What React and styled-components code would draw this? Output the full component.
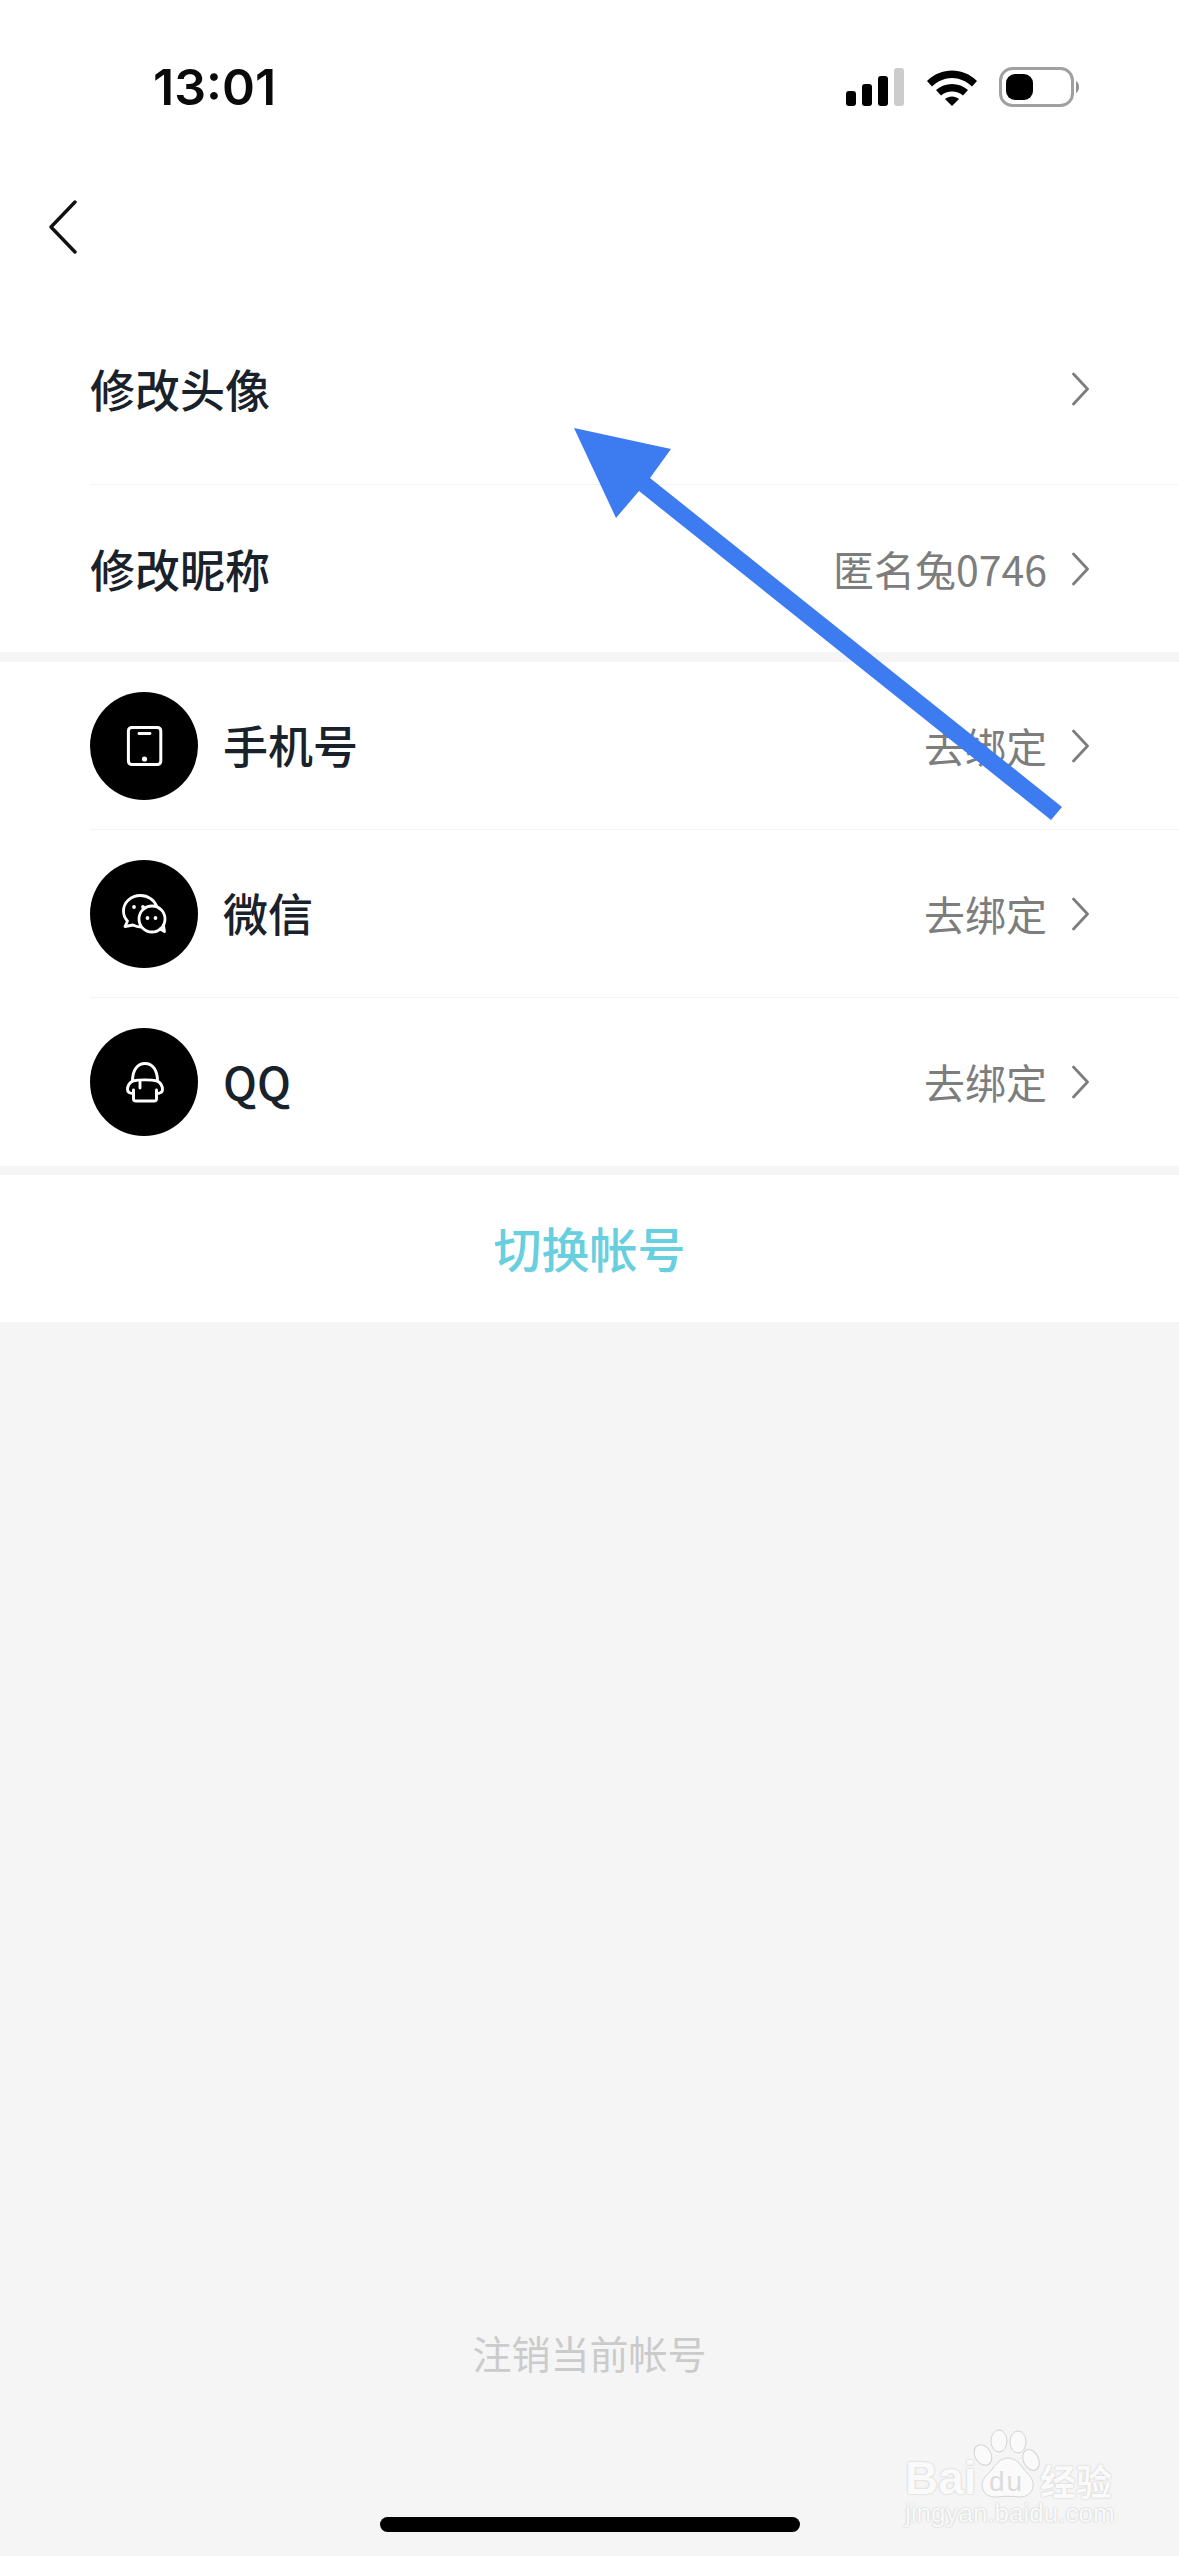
import React from "react";
import styled, { createGlobalStyle } from "styled-components";

const Global = createGlobalStyle`
  html, body { margin: 0; padding: 0; background: #f5f5f5; }
  body { font-family: "Noto Sans CJK SC", "Noto Sans", sans-serif; }
`;
const Page = styled.div`
  position: relative;
  width: 1179px;
  height: 2556px;
  overflow: hidden;
  display: flex;
  flex-direction: column;
  background: #f5f5f5;
`;
const TopArea = styled.div`
  background: #fff;
  height: 294px;
  display: flex;
  flex-direction: column;
`;
const StatusBar = styled.div`
  height: 174px;
  display: flex;
  align-items: center;
  justify-content: space-between;
  padding: 0 96px 0 153px;
`;
const Time = styled.div`
  font-family: Inter, "Liberation Sans", sans-serif;
  font-weight: 600;
  font-size: 50px;
  line-height: 50px;
  color: #0a0a0a;
`;
const IconsRow = styled.div`
  display: flex;
  align-items: center;
  gap: 21px;
`;
const BackRow = styled.div`
  padding: 26px 0 0 48px;
  display: flex;
`;
const Section = styled.section`
  background: #fff;
  margin-bottom: ${(p) => p.$gap || 0}px;
`;
const Row = styled.div`
  height: ${(p) => p.$h}px;
  margin-left: 90px;
  padding-right: 90px;
  display: flex;
  align-items: center;
  gap: 25px;
  border-bottom: ${(p) => (p.$line ? "1px solid #f3f3f3" : "none")};
`;
const Circle = styled.div`
  width: 108px;
  height: 108px;
  border-radius: 50%;
  background: #000;
  flex: none;
  display: flex;
  align-items: center;
  justify-content: center;
`;
const Label = styled.div`
  font-size: 45px;
  font-weight: 500;
  line-height: 60px;
  color: #19222a;
  flex: 1;
  padding-bottom: ${(p) => p.$lift || 0}px;
`;
const Value = styled.div`
  font-size: 41px;
  line-height: 56px;
  color: #7d7d7d;
  padding-bottom: 2px;
`;
const SwitchButton = styled.div`
  background: #fff;
  height: 147px;
  padding-bottom: 4px;
  box-sizing: border-box;
  display: flex;
  align-items: center;
  justify-content: center;
  font-size: 48px;
  font-weight: 500;
  color: #68cfdf;
`;
const Spacer = styled.div`
  flex: 1;
`;
const Logout = styled.div`
  text-align: center;
  font-size: 39px;
  line-height: 56px;
  color: #cbcbcb;
  margin-bottom: 176px;
`;
const HomeBar = styled.div`
  position: absolute;
  left: 380px;
  top: 2517px;
  width: 420px;
  height: 15px;
  border-radius: 8px;
  background: #000;
`;
const ArrowLayer = styled.svg`
  position: absolute;
  left: 0;
  top: 0;
  pointer-events: none;
`;
const Watermark = styled.div`
  position: absolute;
  left: 904px;
  top: 2428px;
  width: 216px;
  height: 102px;
  color: #fafafa;
  text-shadow: 0 0 2px #bdbdbd;
`;
const WmBai = styled.span`
  position: absolute;
  left: 1px;
  top: 29px;
  font-family: "Liberation Sans", sans-serif;
  font-weight: 700;
  font-size: 46px;
  line-height: 42px;
`;
const WmDu = styled.span`
  position: absolute;
  left: 85px;
  top: 41px;
  font-family: "Liberation Sans", sans-serif;
  font-size: 28px;
  line-height: 26px;
  letter-spacing: 2px;
  color: #dcdcdc;
  text-shadow: none;
`;
const WmCn = styled.span`
  position: absolute;
  left: 136px;
  top: 32px;
  font-size: 36px;
  line-height: 40px;
  font-weight: 700;
`;
const WmUrl = styled.span`
  position: absolute;
  left: 1px;
  top: 72px;
  font-family: "Liberation Sans", sans-serif;
  font-size: 26px;
  line-height: 26px;
  white-space: nowrap;
`;
const PawLayer = styled.svg`
  position: absolute;
  left: 0;
  top: 0;
`;
const ChevronSvg = styled.svg`
  flex: none;
`;

const Chevron = () => (
  <ChevronSvg width="17" height="34" viewBox="0 0 17 34" fill="none">
    <path d="M1.500 2 L15.500 17 L1.500 32" stroke="#7d7d7d" strokeWidth="2.800" strokeLinecap="round" strokeLinejoin="round" />
  </ChevronSvg>
);
const Signal = () => (
  <svg width="59" height="38" viewBox="0 0 59 38">
    <rect x="0" y="23" width="10" height="15" rx="3" fill="#000" />
    <rect x="16" y="16" width="10" height="22" rx="3" fill="#000" />
    <rect x="32" y="8" width="10" height="30" rx="3" fill="#000" />
    <rect x="48" y="0" width="10" height="38" rx="3" fill="#ccc" />
  </svg>
);
const Wifi = () => (
  <svg width="52" height="38" viewBox="0 0 52 38">
    <path d="M1 13 C15 -1 37 -1 51 13 L46 18.500 C34 7 18 7 6 18.500 Z" fill="#000" />
    <path d="M10 22 C19 14 33 14 42 22 L37 27.500 C31 22 21 22 15 27.500 Z" fill="#000" />
    <path d="M19 31 C23 27.500 29 27.500 33 31 L26 38 Z" fill="#000" />
  </svg>
);
const Battery = () => (
  <svg width="84" height="40" viewBox="0 0 84 40">
    <rect x="1.500" y="1.500" width="72" height="37" rx="12" fill="#fff" stroke="#a0a0a0" strokeWidth="3" />
    <rect x="7" y="7" width="27" height="26" rx="9" fill="#000" />
    <path d="M77 14 C81 16 81 24 77 26 Z" fill="#909090" />
  </svg>
);
const BackIcon = () => (
  <svg width="30" height="54" viewBox="0 0 30 54" fill="none">
    <path d="M27 2 L3 27 L27 52" stroke="#111" strokeWidth="3.400" strokeLinecap="round" strokeLinejoin="round" />
  </svg>
);
const PhoneIcon = () => (
  <svg width="108" height="108" viewBox="0 0 108 108" fill="none" stroke="#fff">
    <rect x="38.400" y="35.400" width="32.400" height="37.200" rx="3.500" strokeWidth="3" />
    <path d="M49 41.500 H60" strokeWidth="2.800" strokeLinecap="round" />
    <circle cx="54.500" cy="67" r="2.600" fill="#fff" stroke="none" />
  </svg>
);
const WechatIcon = () => (
  <svg width="108" height="108" viewBox="0 0 108 108" fill="none" stroke="#fff" strokeWidth="2.800" strokeLinejoin="round" strokeLinecap="round">
    <path d="M67 47 C64.500 40 58 35.500 50.500 35.500 C41 35.500 33.500 42.500 33.500 51 C33.500 55 35 58.500 37.500 61 L35 66.500 L43 65 C45.500 66.300 48 67 51 67" />
    <circle cx="62" cy="59" r="13" fill="#000" />
    <path d="M70 69 L74.500 71.500 L73.500 65.500" />
    <circle cx="44" cy="47" r="1.900" fill="#fff" stroke="none" />
    <circle cx="53" cy="47" r="1.900" fill="#fff" stroke="none" />
    <circle cx="57.500" cy="58" r="1.900" fill="#fff" stroke="none" />
    <circle cx="65.500" cy="58" r="1.900" fill="#fff" stroke="none" />
  </svg>
);
const QQIcon = () => (
  <svg width="108" height="108" viewBox="0 0 108 108" fill="none" stroke="#fff" strokeWidth="2.900" strokeLinejoin="round" strokeLinecap="round">
    <path d="M42.500 53 C42.500 42 47.500 35.500 55 35.500 C62.500 35.500 67.500 42 67.500 53" />
    <path d="M42.500 53 C49 51.500 61 51.500 67.500 53" />
    <path d="M42.500 53 C39.500 55 37.500 58.500 37.500 61.500 C37.500 64 40 65.500 43.500 65.500" />
    <path d="M67.500 53 C70.500 55 72.500 58.500 72.500 61.500 C72.500 64 70 65.500 66.500 65.500" />
    <path d="M43.500 62 L43.500 71 C43.500 72.500 44.500 73 46 73 L64 73 C65.500 73 66.500 72.500 66.500 71 L66.500 62" />
    <path d="M50 54 L50 60" />
  </svg>
);
const Paw = () => (
  <PawLayer width="216" height="102" viewBox="0 0 216 102">
    <g fill="#fafafa" stroke="#d4d4d4" strokeWidth="1">
      <ellipse cx="79" cy="27" rx="8" ry="11" transform="rotate(-30 79 27)" />
      <ellipse cx="95" cy="13" rx="8" ry="11" />
      <ellipse cx="114" cy="14" rx="8" ry="11" />
      <ellipse cx="127" cy="32" rx="7.500" ry="11" transform="rotate(-25 127 32)" />
      <path d="M104 30 C114 30 118 40 124 46 C134 55 129 70 114 69 C108 68 100 68 93 69 C78 70 73 55 84 46 C90 40 94 30 104 30 Z" />
    </g>
  </PawLayer>
);
function StatusIcons() {
  return (
    <IconsRow>
      <Signal />
      <Wifi />
      <Battery />
    </IconsRow>
  );
}

export default function App() {
  return (
    <Page>
      <Global />
      <TopArea>
        <StatusBar>
          <Time>13:01</Time>
          <StatusIcons />
        </StatusBar>
        <BackRow>
          <BackIcon />
        </BackRow>
      </TopArea>
      <Section $gap={10}>
        <Row $h={190} $line>
          <Label>修改头像</Label>
          <Chevron />
        </Row>
        <Row $h={167}>
          <Label>修改昵称</Label>
          <Value>匿名兔0746</Value>
          <Chevron />
        </Row>
      </Section>
      <Section $gap={9}>
        <Row $h={167} $line>
          <Circle><PhoneIcon /></Circle>
          <Label $lift={2}>手机号</Label>
          <Value>去绑定</Value>
          <Chevron />
        </Row>
        <Row $h={167} $line>
          <Circle><WechatIcon /></Circle>
          <Label $lift={2}>微信</Label>
          <Value>去绑定</Value>
          <Chevron />
        </Row>
        <Row $h={168}>
          <Circle><QQIcon /></Circle>
          <Label $lift={2}>QQ</Label>
          <Value>去绑定</Value>
          <Chevron />
        </Row>
      </Section>
      <SwitchButton>切换帐号</SwitchButton>
      <Spacer />
      <Logout>注销当前帐号</Logout>
      <HomeBar />
      <ArrowLayer width="1179" height="2556" viewBox="0 0 1179 2556">
        <polygon points="574,428 671,449 650,478 1062,807 1051,820 639,491 616,518" fill="#3d7bf0" />
      </ArrowLayer>
      <Watermark>
        <Paw />
        <WmBai>Bai</WmBai>
        <WmDu>du</WmDu>
        <WmCn>经验</WmCn>
        <WmUrl>jingyan.baidu.com</WmUrl>
      </Watermark>
    </Page>
  );
}
